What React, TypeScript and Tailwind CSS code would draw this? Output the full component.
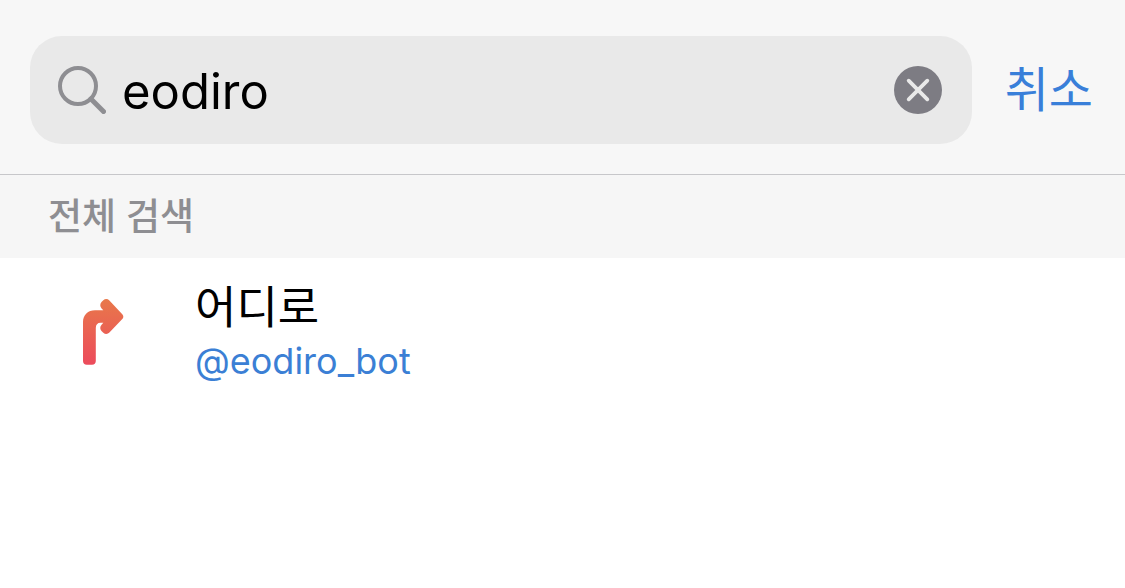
import { useState } from "react";

function SearchIcon() {
  return (
    <svg viewBox="0 0 48 48" className="size-12 shrink-0" fill="none" stroke="#8e8e92" aria-hidden="true">
      <circle cx="20" cy="20" r="18" strokeWidth="4" />
      <path d="M33 33L45.5 45.5" strokeWidth="5" strokeLinecap="round" />
    </svg>
  );
}

function ClearIcon() {
  return (
    <svg viewBox="0 0 48 48" className="size-12" aria-hidden="true">
      <circle cx="24" cy="24" r="24" fill="#7d7c83" />
      <path d="M14.7 14.7L33.3 33.3M33.3 14.7L14.7 33.3" stroke="#e9e9e9" strokeWidth="3.8" strokeLinecap="round" />
    </svg>
  );
}

function BotAvatar() {
  return (
    <svg viewBox="0 0 110 110" className="size-[110px] shrink-0" aria-hidden="true">
      <defs>
        <linearGradient id="turn" x1="0" y1="22" x2="0" y2="88" gradientUnits="userSpaceOnUse">
          <stop offset="0" stopColor="#e8784a" />
          <stop offset="1" stopColor="#ec4b5c" />
        </linearGradient>
      </defs>
      <path
        fill="url(#turn)"
        d="M35 45C35 38 40 33.3 47 33.3H55.3L53.6 31.4C51.8 29.5 51.9 26.9 53.5 25L55.3 23.2C57.2 21.6 59.6 21.7 61.4 23.4L74.3 37.2C75.7 38.7 75.7 40.6 74.3 42L61.4 55.6C59.6 57.4 57.2 57.4 55.3 55.7L53.5 53.9C51.9 52.1 51.8 49.6 53.6 47.7L55.3 45.8H52.5C49.5 45.8 47.8 47.8 47.8 51V84C47.8 86.4 46.4 87.8 44 87.8H38.8C36.4 87.8 35 86.4 35 84Z"
      />
    </svg>
  );
}

export default function App() {
  const [query, setQuery] = useState("eodiro");

  return (
    <div className="min-h-screen bg-white font-['Inter','Noto_Sans_CJK_KR',sans-serif] text-black">
      <header className="flex items-center gap-8 border-b border-[#c7c7ca] bg-[#f7f7f7] pt-9 pr-8 pb-[30px] pl-[30px]">
        <div className="mr-px flex h-[108px] min-w-0 flex-1 items-center rounded-[32px] bg-[#e9e9e9] pr-[30px] pl-7">
          <SearchIcon />
          <input
            type="text"
            aria-label="검색"
            value={query}
            onChange={(event) => setQuery(event.target.value)}
            className="h-20 min-w-0 flex-1 bg-transparent pt-0.5 pl-4 text-[49px] outline-none"
          />
          <button type="button" aria-label="지우기" onClick={() => setQuery("")}>
            <ClearIcon />
          </button>
        </div>
        <button type="button" className="shrink-0 text-5xl leading-16 text-[#397fd9]">
          취소
        </button>
      </header>

      <main>
        <h2 className="bg-[#f6f6f6] px-12 py-4 text-[37px] leading-[51px] font-medium text-[#8e8e92]">전체 검색</h2>
        <ul>
          <li>
            <a href="#eodiro_bot" className="flex items-start gap-9 px-12 py-[19px]">
              <BotAvatar />
              <span className="flex min-w-0 flex-col pl-px">
                <span className="text-[45px] leading-[62px]">어디로</span>
                <span className="text-4xl leading-[44px] text-[#3b7fd5]">@eodiro_bot</span>
              </span>
            </a>
          </li>
        </ul>
      </main>
    </div>
  );
}
